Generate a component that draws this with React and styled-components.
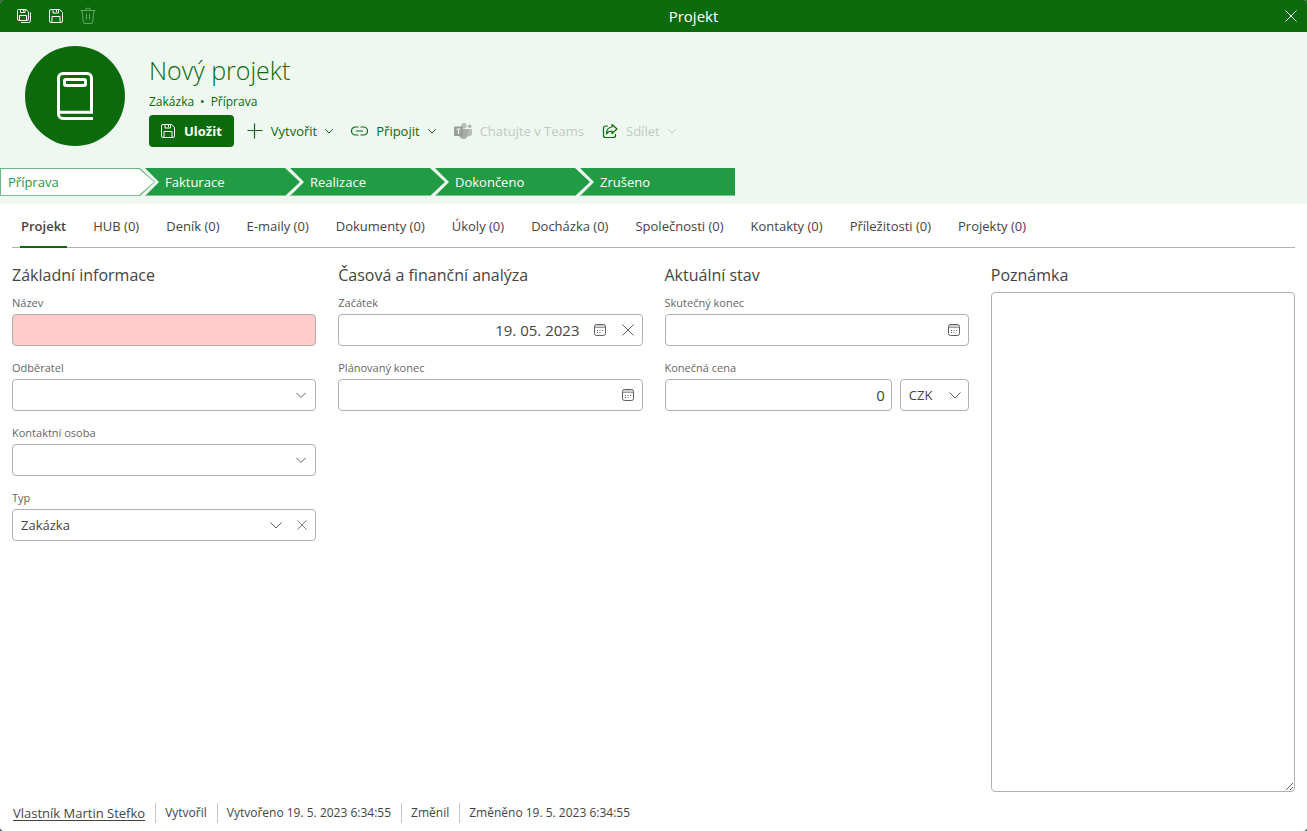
import React from 'react'
import styled, { createGlobalStyle } from 'styled-components'

const tabs = [
  'Projekt',
  'HUB (0)',
  'Deník (0)',
  'E-maily (0)',
  'Dokumenty (0)',
  'Úkoly (0)',
  'Docházka (0)',
  'Společnosti (0)',
  'Kontakty (0)',
  'Příležitosti (0)',
  'Projekty (0)',
]

const stages = ['Příprava', 'Fakturace', 'Realizace', 'Dokončeno', 'Zrušeno']

function SaveIcon() {
  return (
    <Icon width='16' height='16' viewBox='0 0 16 16'>
      <path d='M3 1.5h8.6l2.9 2.9V13A1.5 1.5 0 0 1 13 14.5H3A1.5 1.5 0 0 1 1.5 13V3A1.5 1.5 0 0 1 3 1.5z' />
      <path d='M5 1.5v3.5h5.5V1.5M8.5 2v2M4 14.5V8.5h8v6' />
    </Icon>
  )
}

function SaveAllIcon() {
  return (
    <Icon width='16' height='16' viewBox='0 0 16 16'>
      <path d='M2.5 1.5h7.6l2.4 2.4v7.1a1.5 1.5 0 0 1-1.5 1.5H3A1.5 1.5 0 0 1 1.5 11V2.5a1 1 0 0 1 1-1z' />
      <path d='M4.5 1.5v3h4.5v-3M7.5 2v1.5M3.5 12.5v-5h7v5' />
      <path d='M14.5 4.5v8a2 2 0 0 1-2 2H5' />
    </Icon>
  )
}

function TrashIcon() {
  return (
    <Icon width='16' height='18' viewBox='0 0 16 18'>
      <path d='M0.5 3.5h15M5.5 3.5a2.5 2.5 0 0 1 5 0M2 3.5l1.3 11.5a1.7 1.7 0 0 0 1.7 1.5h6a1.7 1.7 0 0 0 1.7-1.5L14 3.5M6.5 7v5.5M9.5 7v5.5' />
    </Icon>
  )
}

function CloseIcon({ size = 12 }) {
  return (
    <Icon width={size} height={size} viewBox='0 0 12 12'>
      <path d='M0.5 0.5l11 11M11.5 0.5l-11 11' />
    </Icon>
  )
}

function ChevronIcon({ size = 12 }) {
  return (
    <Icon width={size} height={size} viewBox='0 0 12 12'>
      <path d='M0.5 3.5l5.5 5.5 5.5-5.5' strokeWidth={12 / size} />
    </Icon>
  )
}

function PlusIcon() {
  return (
    <Icon width='16' height='16' viewBox='0 0 16 16'>
      <path d='M7.5 0.5v15M0.5 7.5h15' strokeWidth='1.2' />
    </Icon>
  )
}

function LinkIcon() {
  return (
    <Icon width='17' height='16' viewBox='0 0 17 16'>
      <path d='M7.5 4h-3a3.9 3.9 0 0 0 0 8h3M9.5 4h3a3.9 3.9 0 0 1 0 8h-3M5 8h7' strokeWidth='1.2' />
    </Icon>
  )
}

function TeamsIcon() {
  return (
    <svg width='18' height='16' viewBox='0 0 18 16' aria-hidden='true'>
      <circle cx='15.7' cy='3.2' r='1.8' fill='#b1b5b1' />
      <path d='M12 6h6v4.5a3 3 0 0 1-4.5 2.6z' fill='#b9bdb9' />
      <circle cx='10' cy='2.7' r='2.7' fill='#b9bdb9' />
      <path d='M5 6h9v5.5a4.5 4.5 0 0 1-9 0z' fill='#a9ada9' />
      <rect x='0' y='3.5' width='9' height='9.5' rx='1' fill='#9a9e9a' />
      <path d='M2.5 6h4M4.5 6v5' stroke='#eef8f0' strokeWidth='1.2' fill='none' />
    </svg>
  )
}

function ShareIcon() {
  return (
    <Icon width='16' height='16' viewBox='0 0 16 16'>
      <path d='M6 3H3.5A2 2 0 0 0 1.5 5v7.5a2 2 0 0 0 2 2h8a2 2 0 0 0 2-2V11' strokeWidth='1.2' />
      <path d='M10 1.5l5 4.5-5 4.5V8C7.5 8 5.8 8.7 4.5 11c0-4 1.8-6.6 5.5-7z' strokeWidth='1.2' strokeLinejoin='round' />
    </Icon>
  )
}

function CalendarIcon() {
  return (
    <Icon width='12' height='12' viewBox='0 0 12 12'>
      <path d='M1 3.5V2.5a2 2 0 0 1 2-2h6a2 2 0 0 1 2 2v1z' fill='#d2d0ce' stroke='none' />
      <path d='M1 3.5h10' stroke='#a19f9d' />
      <rect x='0.5' y='0.5' width='11' height='11' rx='2' />
      <path d='M3 6.5h1M5.5 6.5h1M8 6.5h1M3 8.5h1M5.5 8.5h1' />
    </Icon>
  )
}

function BookIcon() {
  return (
    <svg width='36' height='50' viewBox='0 0 36 50' aria-hidden='true' fill='none' stroke='#fff' strokeWidth='3'>
      <path d='M36 47.5H6A4.5 4.5 0 0 1 1.5 43V7A4.5 4.5 0 0 1 6 2.5h24a4.5 4.5 0 0 1 4.5 4.5v34.3H3' />
      <rect x='7.5' y='8.5' width='21' height='6' rx='1.5' />
    </svg>
  )
}

function App() {
  return (
    <Page>
      <GlobalStyle />
      <TitleBar>
        <TitleButton aria-label='Uložit a zavřít'><SaveAllIcon /></TitleButton>
        <TitleButton aria-label='Uložit'><SaveIcon /></TitleButton>
        <TitleButton aria-label='Smazat' disabled><TrashIcon /></TitleButton>
        <WindowTitle>Projekt</WindowTitle>
        <TitleButton aria-label='Zavřít'><CloseIcon /></TitleButton>
      </TitleBar>

      <Header>
        <Summary>
          <Avatar><BookIcon /></Avatar>
          <div>
            <ProjectName>Nový projekt</ProjectName>
            <Breadcrumb>
              <span>Zakázka</span>
              <span>•</span>
              <span>Příprava</span>
            </Breadcrumb>
            <Commands>
              <SaveButton><SaveIcon />Uložit</SaveButton>
              <Command><PlusIcon />Vytvořit<ChevronIcon size={8} /></Command>
              <Command><LinkIcon />Připojit<ChevronIcon size={8} /></Command>
              <Command disabled><TeamsIcon />Chatujte v Teams</Command>
              <Command disabled><ShareMark><ShareIcon /></ShareMark>Sdílet<ChevronIcon size={8} /></Command>
            </Commands>
          </div>
        </Summary>
        <Stages>
          {stages.map((stage, i) => (
            <Stage key={stage} $current={i === 0} $last={i === stages.length - 1}>
              <span>{stage}</span>
            </Stage>
          ))}
        </Stages>
      </Header>

      <Tabs role='tablist'>
        {tabs.map((tab, i) => (
          <Tab key={tab} role='tab' aria-selected={i === 0} $active={i === 0}>{tab}</Tab>
        ))}
      </Tabs>

      <Form>
        <Column>
          <Heading>Základní informace</Heading>
          <Field>
            <Label htmlFor='name'>Název</Label>
            <Box $required><Input id='name' /></Box>
          </Field>
          <Field>
            <Label htmlFor='customer'>Odběratel</Label>
            <Box>
              <Input id='customer' />
              <IconButton aria-label='Vybrat odběratele'><ChevronIcon size={10} /></IconButton>
            </Box>
          </Field>
          <Field>
            <Label htmlFor='contact'>Kontaktní osoba</Label>
            <Box>
              <Input id='contact' />
              <IconButton aria-label='Vybrat kontaktní osobu'><ChevronIcon size={10} /></IconButton>
            </Box>
          </Field>
          <Field>
            <Label htmlFor='type'>Typ</Label>
            <Box>
              <Select id='type'><option>Zakázka</option></Select>
              <SelectArrow><ChevronIcon /></SelectArrow>
              <IconButton $narrow aria-label='Vymazat typ'><CloseIcon size={10} /></IconButton>
            </Box>
          </Field>
        </Column>

        <Column>
          <Heading>Časová a finanční analýza</Heading>
          <Field>
            <Label htmlFor='start'>Začátek</Label>
            <Box>
              <Input id='start' $number defaultValue='19. 05. 2023' />
              <IconButton aria-label='Vybrat začátek'><CalendarIcon /></IconButton>
              <IconButton aria-label='Vymazat začátek'><CloseIcon size={12} /></IconButton>
            </Box>
          </Field>
          <Field>
            <Label htmlFor='planned'>Plánovaný konec</Label>
            <Box>
              <Input id='planned' $number />
              <IconButton aria-label='Vybrat plánovaný konec'><CalendarIcon /></IconButton>
            </Box>
          </Field>
        </Column>

        <Column>
          <Heading>Aktuální stav</Heading>
          <Field>
            <Label htmlFor='finished'>Skutečný konec</Label>
            <Box>
              <Input id='finished' $number />
              <IconButton aria-label='Vybrat skutečný konec'><CalendarIcon /></IconButton>
            </Box>
          </Field>
          <Field>
            <Label htmlFor='price'>Konečná cena</Label>
            <PriceRow>
              <Box><Input id='price' $number defaultValue='0' /></Box>
              <CurrencyBox>
                <Select aria-label='Měna'><option>CZK</option></Select>
                <SelectArrow><ChevronIcon /></SelectArrow>
              </CurrencyBox>
            </PriceRow>
          </Field>
        </Column>

        <Column>
          <Heading as='label' htmlFor='note'>Poznámka</Heading>
          <Note id='note' />
        </Column>
      </Form>

      <Footer>
        <FooterItem><OwnerLink href='#'>Vlastník Martin Stefko</OwnerLink></FooterItem>
        <FooterItem>Vytvořil</FooterItem>
        <FooterItem>Vytvořeno 19. 5. 2023 6:34:55</FooterItem>
        <FooterItem>Změnil</FooterItem>
        <FooterItem>Změněno 19. 5. 2023 6:34:55</FooterItem>
      </Footer>
    </Page>
  )
}

export default App

const GlobalStyle = createGlobalStyle`
  * {
    box-sizing: border-box;
  }

  body {
    margin: 0;
    background-color: #4a4a4a;
  }

  body, button, input, select, textarea {
    font-family: 'Open Sans', 'Noto Sans', sans-serif;
    font-size: 13px;
    color: #444;
  }

  button {
    border: none;
    padding: 0;
    background: none;
    cursor: pointer;
  }
`

const Icon = styled.svg.attrs({ 'aria-hidden': true })`
  fill: none;
  stroke: currentColor;
  flex-shrink: 0;
`

const Page = styled.div`
  min-height: 100vh;
  display: flex;
  flex-direction: column;
  background-color: #fff;
  border-radius: 4px;
  overflow: hidden;
`

const TitleBar = styled.header`
  height: 32px;
  display: flex;
  align-items: center;
  background-color: #0b6a0b;
  color: #fff;
  padding-left: 8px;
`

const TitleButton = styled.button`
  width: 32px;
  height: 32px;
  display: flex;
  align-items: center;
  justify-content: center;
  color: #fff;

  &:disabled {
    color: #69a569;
  }
`

const WindowTitle = styled.div`
  flex: 1;
  padding-left: 8px;
  font-size: 15px;
  font-weight: 500;
  text-align: center;
`

const Header = styled.section`
  background-color: #eef8f0;
  padding-bottom: 8px;
`

const Summary = styled.div`
  display: flex;
  gap: 24px;
  padding: 14px 25px 21px;
`

const Avatar = styled.div`
  width: 100px;
  height: 100px;
  border-radius: 50%;
  background-color: #0b6a0b;
  display: flex;
  align-items: center;
  justify-content: center;
  flex-shrink: 0;
`

const ProjectName = styled.h1`
  margin: 0;
  padding: 4px 0 3px;
  font-size: 25px;
  font-weight: 300;
  line-height: 40px;
  color: #0b6a0b;
`

const Breadcrumb = styled.div`
  display: flex;
  gap: 6px;
  font-size: 12px;
  line-height: 18px;
  padding-bottom: 4px;
  color: #0b6a0b;
`

const Commands = styled.div`
  display: flex;
  gap: 18px;
`

const Command = styled.button`
  height: 32px;
  display: flex;
  align-items: center;
  gap: 8px;
  color: #0b6a0b;

  &:disabled {
    color: #c3c8c3;
  }
`

const SaveButton = styled(Command)`
  padding: 0 12px 0 11px;
  margin-right: -5px;
  border-radius: 4px;
  background-color: #0b6a0b;
  color: #fff;
  font-weight: 700;
`

const ShareMark = styled.span`
  display: flex;
  color: #0b6a0b;
`

const Stages = styled.div`
  display: flex;
`

const stageStart = props => (props.$current ? '0 50%' : '14px 50%')
const stageEnd = props => (props.$last ? '100%' : 'calc(100% - 15px)')

const Stage = styled.button`
  position: relative;
  width: 155px;
  height: 28px;
  padding-left: ${props => (props.$current ? '8px' : '20px')};
  text-align: left;
  background-color: ${props => (props.$current ? '#68bb80' : '#229b45')};
  border-bottom: 1px solid #7cc491;
  color: ${props => (props.$current ? '#229b45' : '#fff')};
  clip-path: polygon(0 0, ${stageEnd} 0, 100% 50%, ${stageEnd} 100%, 0 100%, ${stageStart});

  & + & {
    margin-left: -10px;
  }

  span {
    position: relative;
  }

  &::before {
    content: '';
    display: ${props => (props.$current ? 'block' : 'none')};
    position: absolute;
    inset: 1px 1px 0;
    background-color: #fff;
    clip-path: polygon(0 0, calc(100% - 15px) 0, 100% 50%, calc(100% - 15px) 100%, 0 100%);
  }
`

const Tabs = styled.nav`
  display: flex;
  gap: 25px;
  height: 44px;
  margin: 0 12px;
  padding-left: 8px;
  border-bottom: 1px solid #b3b0ad;
`

const Tab = styled.button`
  height: 44px;
  padding: 2px 1px 0;
  font-weight: ${props => (props.$active ? 600 : 400)};
  border-bottom: 2px solid ${props => (props.$active ? '#0b6a0b' : 'transparent')};
  white-space: nowrap;
`

const Form = styled.main`
  flex: 1;
  display: grid;
  grid-template-columns: repeat(4, minmax(0, 1fr));
  gap: 22px;
  padding: 10px 12px 0;
`

const Column = styled.section`
  display: flex;
  flex-direction: column;
`

const Heading = styled.h2`
  margin: 0;
  font-size: 16px;
  font-weight: 400;
  line-height: 34px;
`

const Field = styled.div`
  margin-bottom: 11px;
`

const Label = styled.label`
  display: block;
  font-size: 11px;
  line-height: 22px;
  color: #666;
`

const Box = styled.div`
  flex: 1;
  min-width: 0;
  height: 32px;
  display: flex;
  align-items: center;
  border: 1px solid #b3b0ad;
  border-radius: 4px;
  background-color: ${props => (props.$required ? '#ffcbcb' : '#fff')};
`

const Input = styled.input`
  flex: 1;
  min-width: 0;
  height: 100%;
  padding: 0 6px 0 8px;
  border: none;
  outline: none;
  background: none;
  font-size: ${props => (props.$number ? '15px' : '13px')};
  text-align: ${props => (props.$number ? 'right' : 'left')};
`

const Select = styled.select`
  flex: 1;
  min-width: 0;
  height: 100%;
  padding: 0 0 0 8px;
  border: none;
  outline: none;
  background: none;
  appearance: none;
`

const IconButton = styled.button`
  width: ${props => (props.$narrow ? '26px' : '28px')};
  height: 30px;
  display: flex;
  align-items: center;
  justify-content: center;
  color: #605e5c;
`

const SelectArrow = styled.span`
  width: 26px;
  display: flex;
  justify-content: center;
  color: #605e5c;
  pointer-events: none;
`

const PriceRow = styled.div`
  display: flex;
  gap: 8px;
`

const CurrencyBox = styled(Box)`
  flex: 0 0 69px;
`

const Note = styled.textarea`
  flex: 1;
  width: 100%;
  padding: 8px;
  border: 1px solid #b3b0ad;
  border-radius: 4px;
  resize: vertical;
  outline: none;
`

const Footer = styled.footer`
  display: flex;
  padding: 11px 4px 8px;
`

const FooterItem = styled.div`
  height: 20px;
  display: flex;
  align-items: center;
  padding: 0 10px 0 9px;
  font-size: 12px;
  line-height: 20px;

  & + & {
    border-left: 1px solid #c8c6c4;
  }
`

const OwnerLink = styled.a`
  color: inherit;
  font-size: 13px;
  text-underline-offset: 2px;
`
